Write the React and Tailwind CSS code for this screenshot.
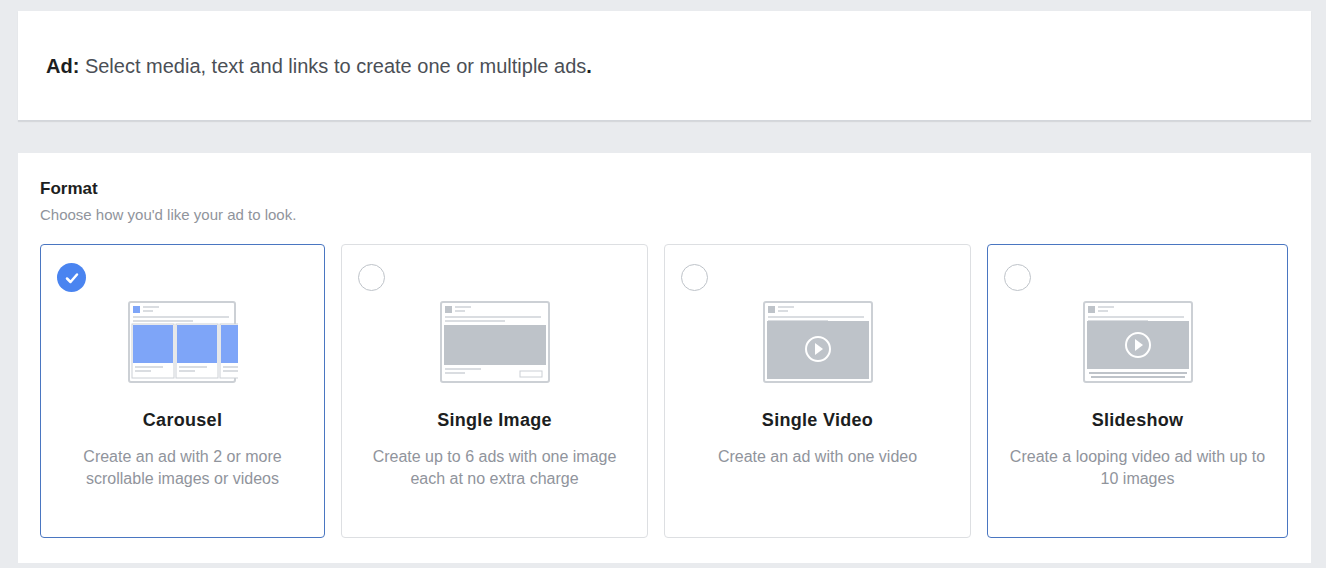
const F = { fontFamily: '"Liberation Sans", Arial, sans-serif' };

function Frame({ children }) {
  return (
    <svg width="110" height="82" viewBox="0 0 110 82">
      <rect x="1" y="1" width="108" height="80" rx="2" fill="#fff" stroke="#ccd0d5" strokeWidth="2" />
      {children}
    </svg>
  );
}
const Head = ({ c = "#bec3c9" }) => (
  <g>
    <rect x="5" y="5" width="7" height="7" fill={c} />
    <rect x="15" y="5" width="16" height="2" fill="#dadde1" />
    <rect x="15" y="9" width="10" height="2" fill="#dadde1" />
    <rect x="5" y="15" width="96" height="2" fill="#dadde1" />
    <rect x="5" y="19" width="60" height="2" fill="#dadde1" />
  </g>
);

function Carousel() {
  return (
    <svg width="110" height="82" viewBox="0 0 110 82">
      <rect x="1" y="1" width="106" height="80" rx="2" fill="#fff" stroke="#ccd0d5" strokeWidth="2" />
      <Head c="#7ea5f8" />
      {[4, 48, 92].map((x) => (
        <g key={x}>
          <rect x={x} y="23" width="42" height="54" fill="#fff" stroke="#ccd0d5" strokeWidth="1" />
          <rect x={x + 1} y="24" width="40" height="38" fill="#7ea5f8" />
          <rect x={x + 3} y="65" width="28" height="2" fill="#dadde1" />
          <rect x={x + 3} y="69" width="16" height="2" fill="#dadde1" />
        </g>
      ))}
    </svg>
  );
}
function Single() {
  return (
    <Frame>
      <Head />
      <rect x="4" y="24" width="102" height="40" fill="#bec3c9" />
      <rect x="5" y="67" width="36" height="2" fill="#dadde1" />
      <rect x="5" y="71" width="20" height="2" fill="#dadde1" />
      <rect x="80" y="70" width="22" height="6" fill="none" stroke="#ccd0d5" />
    </Frame>
  );
}
const Play = () => (
  <g>
    <circle cx="55" cy="48" r="12" fill="none" stroke="#fff" strokeWidth="2" />
    <path d="M52 42 L60 48 L52 54 Z" fill="#fff" />
  </g>
);
function Video() {
  return (
    <Frame>
      <Head />
      <rect x="4" y="20" width="102" height="58" fill="#bec3c9" />
      <Play />
    </Frame>
  );
}
function Slideshow() {
  return (
    <Frame>
      <Head />
      <rect x="4" y="20" width="102" height="48" fill="#bec3c9" />
      <g transform="translate(0,-4)"><Play /></g>
      <rect x="6" y="71" width="98" height="2" fill="#bec3c9" />
      <rect x="8" y="75" width="94" height="2" fill="#bec3c9" />
    </Frame>
  );
}

function Card({ sel, blue, title, desc, Icon }) {
  return (
    <div className={`relative flex flex-col items-center rounded-[4px] border ${sel || blue ? "border-[#4a76c1]" : "border-[#dddfe2]"} bg-white h-[294px] pt-[56px]`}>
      {sel ? (
        <div className="absolute left-[16px] top-[18px] w-[29px] h-[29px] rounded-full bg-[#4a84f0] flex items-center justify-center">
          <svg width="16" height="16" viewBox="0 0 16 16"><path d="M3 8.5 L6.5 12 L13 4.5" fill="none" stroke="#fff" strokeWidth="2.5" strokeLinecap="round" strokeLinejoin="round" /></svg>
        </div>
      ) : (
        <div className="absolute left-[16px] top-[19px] w-[27px] h-[27px] rounded-full border border-[#bec3c9] bg-white" />
      )}
      <Icon />
      <div className="mt-[24px] text-[18px] font-bold text-[#1c1e21] tracking-[0.3px]">{title}</div>
      <div className="mt-[12px] text-[16px] leading-[22px] text-[#90949c] text-center px-[18px]">{desc}</div>
    </div>
  );
}

export default function App() {
  return (
    <div style={F} className="w-[1326px] h-[568px] bg-[#e9ebee] pl-[18px] pt-[11px] overflow-hidden">
      <div className="w-[1293px] bg-white h-[110px] border-b border-[#d3d6db] flex items-center px-[28px] text-[20px] text-[#1c1e21] shadow-[0_1px_1px_rgba(0,0,0,0.08)]">
        <span className="font-bold">Ad:</span>&nbsp;<span className="text-[#4b4f56]">Select media, text and links to create one or multiple ads</span><span className="font-bold">.</span>
      </div>
      <div className="w-[1293px] bg-white mt-[32px] h-[410px] px-[22px] pt-[23px]">
        <div className="text-[17px] font-bold text-[#1c1e21]">Format</div>
        <div className="text-[15px] text-[#90949c] mt-[2px]">Choose how you'd like your ad to look.</div>
        <div className="grid grid-cols-[285px_307px_307px_301px] gap-[16px] mt-[18px]">
          <Card sel title="Carousel" desc="Create an ad with 2 or more scrollable images or videos" Icon={Carousel} />
          <Card title="Single Image" desc="Create up to 6 ads with one image each at no extra charge" Icon={Single} />
          <Card title="Single Video" desc="Create an ad with one video" Icon={Video} />
          <Card blue title="Slideshow" desc="Create a looping video ad with up to 10 images" Icon={Slideshow} />
        </div>
      </div>
    </div>
  );
}
